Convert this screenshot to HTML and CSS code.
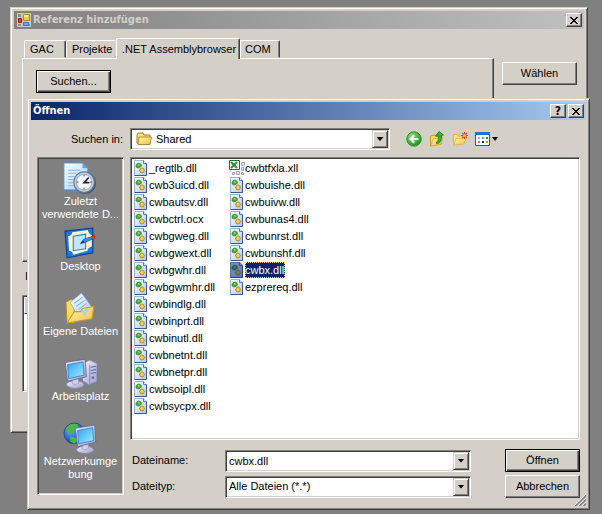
FILE: index.html
```html
<!DOCTYPE html>
<html lang="de">
<head>
<meta charset="utf-8">
<title>Referenz hinzufügen</title>
<link rel="stylesheet" href="styles.css">
</head>
<body>
<svg class="defs" aria-hidden="true">
  <defs>
    <linearGradient id="paper" x1="0" y1="0" x2="1" y2="1"><stop offset="0" stop-color="#fff"/><stop offset="1" stop-color="#a8ccfa"/></linearGradient>
    <linearGradient id="screen" x1="0" y1="0" x2="1" y2="1"><stop offset="0" stop-color="#2ea4f4"/><stop offset="1" stop-color="#a4ecff"/></linearGradient>
    <linearGradient id="folder" x1="0" y1="0" x2="1" y2="1"><stop offset="0" stop-color="#fff6b4"/><stop offset="1" stop-color="#f0c040"/></linearGradient>
    <linearGradient id="metal" x1="0" y1="0" x2="1" y2="1"><stop offset="0" stop-color="#f4f4ff"/><stop offset="1" stop-color="#9c9ccc"/></linearGradient>
    <radialGradient id="green" cx=".35" cy=".3" r=".8"><stop offset="0" stop-color="#8ce070"/><stop offset="1" stop-color="#129018"/></radialGradient>
    <radialGradient id="ocean" cx=".35" cy=".3" r=".8"><stop offset="0" stop-color="#60b4ff"/><stop offset="1" stop-color="#0838a8"/></radialGradient>
    <symbol id="dll" viewBox="0 0 16 16">
      <path d="M1.500.5h9l3 3v12h-12z" fill="url(#paper)" stroke="#98b0dc"/>
      <path d="M1.500 15.500h12v-12" fill="none" stroke="#38589c"/>
      <path d="M10.500.5v3h3" fill="#dce8fc" stroke="#5878b8"/>
      <path d="M3 5l1-1.500 2-.5 2 1 .5 2-1.500 1.500-2 .5L3 7z" fill="#48a830" stroke="#2c7c24" stroke-width=".6"/>
      <path d="M4.500 5l1-1 1.500 1-1 1z" fill="#a8e080"/>
      <path d="M9 7.500v6M6 10.500h6M7 8.500l4 4M11 8.500l-4 4" stroke="#c88c20" stroke-width="1.300"/>
      <circle cx="9" cy="10.500" r="2" fill="#fcd458" stroke="#c88c20" stroke-width=".6"/>
    </symbol>
    <symbol id="monitor" viewBox="0 0 22 28">
      <ellipse cx="10" cy="24" rx="8" ry="3.500" fill="url(#metal)" stroke="#8888a8"/>
      <path d="M8 17l5-1v7q-3 2-6 0z" fill="#d0d0e8" stroke="#9494b8" stroke-width=".6"/>
      <path d="M1 4l18-3 1 16-17 4z" fill="url(#metal)" stroke="#666690" stroke-width=".8"/>
      <path d="M3 6l14-2.500 1 12-14 3z" fill="url(#screen)" stroke="#186cb8" stroke-width=".6"/>
    </symbol>
  </defs>
</svg>
<main class="desktop">
  <section class="window back" aria-label="Referenz hinzufügen">
    <header class="titlebar inactive">
      <svg class="app-icon" viewBox="0 0 14 14" aria-hidden="true">
        <path d="M0 0h14v14H0z" fill="#c8c8c8"/>
        <path d="M1 1h3v3H1zM6 10h2v3H6zM1 11h3v2H1zM12 11h1v2h-1z" fill="#909090"/>
        <path d="M6.500 1.500h6v6h-6z" fill="#fcc830" stroke="#b88810"/><path d="M7 2h4v2H7z" fill="#ffeaa0"/>
        <path d="M1.500 5.500h3v4h-3z" fill="#f03828" stroke="#a81010"/>
        <path d="M6.500 9.500h5v3h-5z" fill="#68a4f8" stroke="#3870d0"/>
      </svg>
      <h1>Referenz hinzufügen</h1>
      <button class="caption" aria-label="Schließen"><svg viewBox="0 0 8 7"><path d="M0 0h2v1h1v1h2V1h1V0h2v1H7v1H6v1H5v1h1v1h1v1h1v1H6V6H5V5H3v1H2v1H0V6h1V5h1V4h1V3H2V2H1V1H0z"/></svg></button>
    </header>
    <div class="back-body">
      <div class="tab-area">
        <div class="tabs" role="tablist">
          <button class="tab gac" role="tab">GAC</button>
          <button class="tab projects" role="tab">Projekte</button>
          <button class="tab active" role="tab" aria-selected="true">.NET Assemblybrowser</button>
          <button class="tab com" role="tab">COM</button>
        </div>
        <div class="panel" role="tabpanel"><button class="button default">Suchen...</button></div>
        <div class="clipped-label">I</div>
        <div class="selected-list sunken"><div class="list-head"></div></div>
      </div>
      <div class="side"><button class="button">Wählen</button></div>
    </div>
  </section>

  <section class="window front" role="dialog" aria-label="Öffnen">
    <header class="titlebar">
      <h2>Öffnen</h2>
      <div class="captions">
        <button class="caption help" aria-label="Hilfe">?</button>
        <button class="caption" aria-label="Schließen"><svg viewBox="0 0 8 7"><path d="M0 0h2v1h1v1h2V1h1V0h2v1H7v1H6v1H5v1h1v1h1v1h1v1H6V6H5V5H3v1H2v1H0V6h1V5h1V4h1V3H2V2H1V1H0z"/></svg></button>
      </div>
    </header>
    <div class="lookin">
      <label for="folder-select">Suchen in:</label>
      <div class="combo sunken">
        <svg class="folder-icon" viewBox="0 0 16 14" aria-hidden="true"><path d="M1 3l1-2h5l1 2h6v9H2L1 11z" fill="#fbe27c" stroke="#a87c18"/><path d="M3 5h12.500L14 12.500H2z" fill="url(#folder)" stroke="#a87c18" stroke-width=".8"/></svg>
        <select id="folder-select"><option>Shared</option></select>
        <span class="drop"></span>
      </div>
      <div class="tools">
        <button aria-label="Zurück"><svg viewBox="0 0 16 16"><circle cx="8" cy="8" r="7.200" fill="url(#green)" stroke="#289028"/><path d="M3 8l4.500-4.500L9 5 7.300 7H12.500v2H7.300L9 11l-1.500 1.500z" fill="#fff"/></svg></button>
        <button aria-label="Übergeordneter Ordner"><svg viewBox="0 0 16 16"><path d="M1.500 15V5l4-1 1 1.500 6-1.500v9z" fill="#f8dc60" stroke="#c89c20"/><path d="M2 15l2-7 9.500-2-1.500 7z" fill="url(#folder)" stroke="#d0a428" stroke-width=".7"/><path d="M7 12q3-2 2.500-7H6.500l3.500-4.500L14.500 4l-2 .5q.5 6-3.500 8z" fill="#38b030" stroke="#187818" stroke-width=".8"/></svg></button>
        <button aria-label="Neuer Ordner"><svg viewBox="0 0 16 16"><path d="M1.500 14V3.500h4l1 1.500h5v8z" fill="#fbe27c" stroke="#e0b448"/><path d="M2 14l2-6.500 10-.5-2 6z" fill="url(#folder)" stroke="#e0b448" stroke-width=".8"/><path d="M12.500 1v7M9 4.500h7M10 2l5 5M15 2l-5 5" stroke="#f05020" stroke-width="1.200"/><circle cx="12.500" cy="4.500" r="1.500" fill="#ffac60"/></svg></button>
        <button class="views" aria-label="Ansichten"><svg viewBox="0 0 16 16"><path d="M.5 1.500h14v13H.5z" fill="#fff" stroke="#0868c8"/><path d="M0 1h15v3H0z" fill="#1078e0"/><path d="M3 6h2v2H3z" fill="#b8a8c8"/><path d="M7 6h2v2H7z" fill="#60a0e0"/><path d="M11 6h2v2h-2z" fill="#289028"/><path d="M3 10h2v2H3z" fill="#f07050"/><path d="M7 10h2v2H7z" fill="#002890"/><path d="M11 10h2v2h-2z" fill="#c8a010"/></svg><span class="arrow"></span></button>
      </div>
    </div>
    <div class="front-body">
      <nav class="places sunken" aria-label="Orte">
        <button><svg viewBox="1 0 31 31"><path d="M0 1h18l5 5v21H0z" fill="url(#paper)" stroke="#4890e8" stroke-width=".8"/><path d="M18 1v5h5" fill="#58a0f0"/><path d="M4 8h12M4 11h8M4 14h6M4 17h5M4 20h5M4 23h6" stroke="#8cb8ec"/><circle cx="20.500" cy="20.500" r="10.500" fill="#4c5464"/><circle cx="19.500" cy="19.500" r="10" fill="#b8cce4" stroke="#5c7898"/><circle cx="19.500" cy="19.500" r="7.500" fill="#f4faff" stroke="#88a8c8" stroke-width=".8"/><path d="M19.500 12v2M19.500 25v2M12 19.500h2M25 19.500h2" stroke="#f07020" stroke-width="1.500"/><path d="M24 15l-4.500 5h5" fill="none" stroke="#182838" stroke-width="1.700"/></svg><span>Zuletzt<br>verwendete D...</span></button>
        <button><svg viewBox="1 0 31 31"><path d="M1 4l27-3v24L3 30z" fill="#1878e0" stroke="#083c90"/><path d="M4 9q4-1 4-4l15-2q1 4 4 5v11q-4 1-4 4L9 27q-1-4-4-4z" fill="#fff5c8"/><path d="M9 9l12-2v14l-12 2z" fill="#c4e4ff" stroke="#1878e0"/><path d="M16 16l3-4 9-3 1 2-9 4z" fill="#3890e8" stroke="#184c98" stroke-width=".8"/><path d="M16 16l3-3 1 2z" fill="#183050"/><path d="M27 9l3-1 1 3-3 1z" fill="#d83018"/></svg><span>Desktop</span></button>
        <button><svg viewBox="1 0 31 31"><path d="M2 10l5-3 3 3v20l-7-1z" fill="#f8dc60" stroke="#b88c18" stroke-width=".8"/><path d="M6 10L17 1l11 15-14 9z" fill="url(#paper)" stroke="#78a4dc" stroke-width=".7"/><path d="M10 11l8-6M12 14l8-6M14 17l8-6" stroke="#88b4e8"/><path d="M3 30l7-11h6l2-3 11-2-2 12z" fill="url(#folder)" stroke="#c89c28"/><path d="M16 18l9-2-5 8z" fill="#a4d0f4" opacity=".8"/></svg><span>Eigene Dateien</span></button>
        <button><svg viewBox="1 0 31 31"><path d="M18 6l7-3 7 3v18l-8 3-6-4z" fill="url(#metal)" stroke="#7878a8" stroke-width=".7"/><path d="M25 8v19" stroke="#8888b8"/><path d="M26 10l5-1M26 13l5-1M26 16l5-1" stroke="#6060a0"/><circle cx="28" cy="20" r="1.300" fill="#6868b0"/><use href="#monitor" x="0" y="1" width="24" height="30"/></svg><span>Arbeitsplatz</span></button>
        <button><svg viewBox="1 0 31 31"><circle cx="10" cy="11" r="10" fill="url(#ocean)" stroke="#082c78" stroke-width=".6"/><path d="M2 6l5-4h6l1 4-4 1-1 4-5 1zM6 14l5 1 3 3-4 3-4-2z" fill="#48bc38"/><use href="#monitor" x="10" y="1" width="23" height="31"/></svg><span>Netzwerkumge<br>bung</span></button>
      </nav>
      <div class="main">
        <div class="files sunken">
          <ul>
            <li><svg><use href="#dll"/></svg><span>_regtlb.dll</span></li>
            <li><svg><use href="#dll"/></svg><span>cwb3uicd.dll</span></li>
            <li><svg><use href="#dll"/></svg><span>cwbautsv.dll</span></li>
            <li><svg><use href="#dll"/></svg><span>cwbctrl.ocx</span></li>
            <li><svg><use href="#dll"/></svg><span>cwbgweg.dll</span></li>
            <li><svg><use href="#dll"/></svg><span>cwbgwext.dll</span></li>
            <li><svg><use href="#dll"/></svg><span>cwbgwhr.dll</span></li>
            <li><svg><use href="#dll"/></svg><span>cwbgwmhr.dll</span></li>
            <li><svg><use href="#dll"/></svg><span>cwbindlg.dll</span></li>
            <li><svg><use href="#dll"/></svg><span>cwbinprt.dll</span></li>
            <li><svg><use href="#dll"/></svg><span>cwbinutl.dll</span></li>
            <li><svg><use href="#dll"/></svg><span>cwbnetnt.dll</span></li>
            <li><svg><use href="#dll"/></svg><span>cwbnetpr.dll</span></li>
            <li><svg><use href="#dll"/></svg><span>cwbsoipl.dll</span></li>
            <li><svg><use href="#dll"/></svg><span>cwbsycpx.dll</span></li>
            <li><svg viewBox="0 0 16 16"><path d="M.5.5h10v9H.5z" fill="#fff" stroke="#207830"/><path d="M2 2l6 6M8 2L2 8" stroke="#289038" stroke-width="2"/><path d="M12.500 2.500h3v3h-3zM12.500 7.500h2v3h-2zM7.500 11.500h3v3h-3zM12.500 12.500h2v2h-2zM3.500 12.500h2v2h-2z" fill="#d8f0fc" stroke="#98a8b8"/></svg><span>cwbtfxla.xll</span></li>
            <li><svg><use href="#dll"/></svg><span>cwbuishe.dll</span></li>
            <li><svg><use href="#dll"/></svg><span>cwbuivw.dll</span></li>
            <li><svg><use href="#dll"/></svg><span>cwbunas4.dll</span></li>
            <li><svg><use href="#dll"/></svg><span>cwbunrst.dll</span></li>
            <li><svg><use href="#dll"/></svg><span>cwbunshf.dll</span></li>
            <li class="selected"><svg viewBox="0 0 16 16"><use href="#dll"/><path d="M1 0h10l3 3v13H1z" fill="#0a246a" opacity=".5"/></svg><span>cwbx.dll</span></li>
            <li><svg><use href="#dll"/></svg><span>ezprereq.dll</span></li>
          </ul>
        </div>
        <form class="fields">
          <label for="file-name">Dateiname:</label>
          <div class="combo sunken"><input id="file-name" type="text" value="cwbx.dll"><button type="button" class="drop" aria-label="Liste öffnen"></button></div>
          <button type="button" class="button default">Öffnen</button>
          <label for="file-type">Dateityp:</label>
          <div class="combo sunken"><select id="file-type"><option>Alle Dateien (*.*)</option></select><span class="drop"></span></div>
          <button type="button" class="button">Abbrechen</button>
        </form>
      </div>
    </div>
    <svg class="grip" viewBox="0 0 12 12" aria-hidden="true"><path d="M0 12L12 0M4 12l8-8M8 12l4-4" stroke="#fff"/><path d="M1.500 12L12 1.500M5.500 12L12 5.500M9.500 12L12 9.500" stroke="#808080" stroke-width="1.600"/></svg>
  </section>
</main>
</body>
</html>
```
FILE: styles.css
```css
* { box-sizing: border-box; }

body {
  margin: 0;
  background: #808080;
  color: #000;
  font: 11px/13px "Liberation Sans", Arial, sans-serif;
}

button, input, select { font: inherit; color: inherit; border: 0; border-radius: 0; padding: 0; margin: 0; background: none; }
h1, h2, ul { margin: 0; padding: 0; }
svg { display: block; flex: none; }

.defs { position: absolute; width: 0; height: 0; }

.desktop { position: relative; height: 100vh; overflow: hidden; }

.window {
  position: absolute;
  display: flex;
  flex-direction: column;
  padding: 3px;
  background: #d4d0c8;
  border: 1px solid;
  border-color: #d4d0c8 #404040 #404040 #d4d0c8;
  box-shadow: inset 1px 1px #fff, inset -1px -1px #808080;
}
.back { top: 7px; right: 14px; bottom: 81px; left: 10px; }
.front { top: 98px; right: 12px; bottom: 4px; left: 27px; }

.titlebar {
  display: flex;
  align-items: center;
  justify-content: space-between;
  flex: none;
  height: 18px;
  padding: 0 2px;
  color: #fff;
  background: linear-gradient(90deg, #0a246a, #a6caf0);
}
.titlebar.inactive { color: #d4d0c8; background: linear-gradient(90deg, #808080, #c0c0c0); }
.titlebar h1, .titlebar h2 { flex: 1; font: bold 11px/18px "DejaVu Sans Condensed", "DejaVu Sans", sans-serif; }
.app-icon { width: 14px; height: 14px; margin: 0 2px 0 1px; }
.captions { display: flex; gap: 2px; }

.caption {
  display: flex;
  align-items: center;
  justify-content: center;
  width: 16px;
  height: 14px;
  color: #000;
  background: #d4d0c8;
  border: 1px solid;
  border-color: #fff #404040 #404040 #fff;
  box-shadow: inset -1px -1px #808080;
}
.caption svg { width: 8px; height: 7px; margin-right: 1px; }
.help { font: bold 12px/12px "DejaVu Sans Condensed", sans-serif; }

.sunken {
  background: #fff;
  border: 1px solid;
  border-color: #808080 #fff #fff #808080;
  box-shadow: inset 1px 1px #404040, inset -1px -1px #d4d0c8;
}

.button {
  width: 75px;
  height: 23px;
  background: #d4d0c8;
  border: 1px solid;
  border-color: #fff #404040 #404040 #fff;
  box-shadow: inset -1px -1px #808080;
}
.button.default { border-color: #000; box-shadow: inset 1px 1px #fff, inset -1px -1px #404040, inset -2px -2px #808080; }

.back-body { display: flex; flex: 1; gap: 8px; padding: 9px 7px 37px 8px; }
.tab-area { display: flex; flex: 1; flex-direction: column; }
.tabs { display: flex; align-items: flex-end; height: 20px; padding-left: 2px; }
.tab {
  height: 18px;
  padding-left: 5px;
  text-align: left;
  border: 1px solid;
  border-color: #fff #404040 transparent #fff;
  border-radius: 2px 2px 0 0;
  box-shadow: inset -1px 0 #808080;
  white-space: nowrap;
}
.gac { width: 42px; }
.projects { width: 50px; border-right-color: transparent; box-shadow: none; }
.tab.active { z-index: 1; width: 124px; height: 21px; margin-bottom: -1px; background: #d4d0c8; border-bottom: 0; }
.com { width: 40px; padding-left: 4px; }
.panel {
  height: 204px;
  padding: 11px 13px;
  border: 1px solid;
  border-color: #fff #404040 #404040 #fff;
  box-shadow: inset -1px -1px #808080;
}
.clipped-label { padding: 8px 3px 12px; }
.selected-list { flex: 1; padding: 1px; }
.list-head { height: 17px; background: #d4d0c8; border: 1px solid; border-color: #fff #404040 #404040 #fff; }
.side { padding-top: 24px; }

.lookin { display: flex; align-items: center; flex: none; padding: 8px 0 7px 6px; }
.lookin label { width: 93px; padding-right: 7px; text-align: right; }
.combo { position: relative; display: flex; align-items: center; height: 22px; padding: 2px 1px; }
.lookin .combo { flex: 0 1 260px; }
.combo select, .combo input { flex: 1; min-width: 0; height: 100%; padding: 0 2px; appearance: none; outline: 0; }
.folder-icon { width: 16px; height: 14px; margin: 0 2px 0 4px; }
.drop {
  display: flex;
  align-items: center;
  justify-content: center;
  width: 16px;
  height: 18px;
  background: #d4d0c8;
  border: 1px solid;
  border-color: #d4d0c8 #404040 #404040 #d4d0c8;
  box-shadow: inset 1px 1px #fff, inset -1px -1px #808080;
  pointer-events: none;
}
.drop::before, .arrow {
  content: "";
  width: 7px;
  height: 4px;
  background: #000;
  clip-path: polygon(0 0, 100% 0, 50% 100%);
}
.tools { display: flex; gap: 7px; padding-left: 16px; }
.tools svg { width: 16px; height: 16px; }
.views { display: flex; align-items: center; gap: 1px; }
.arrow { width: 6px; height: 4px; }

.front-body { display: flex; flex: 1; gap: 6px; min-height: 0; padding: 0 6px 11px; }
.places {
  display: flex;
  flex: none;
  flex-direction: column;
  gap: 7px;
  width: 87px;
  padding-top: 4px;
  color: #fff;
  background: #808080;
}
.places button { display: flex; flex-direction: column; align-items: center; height: 58px; }
.places svg { width: 32px; height: 32px; margin-bottom: 1px; overflow: visible; }

.main { display: flex; flex: 1; flex-direction: column; gap: 9px; min-width: 0; margin-bottom: -3px; }
.files { flex: 1; padding: 1px 2px; }
.files ul {
  display: grid;
  grid-template-rows: repeat(15, 17px);
  grid-auto-flow: column;
  grid-auto-columns: 96px;
  list-style: none;
}
.files li { display: flex; align-items: center; }
.files svg { width: 16px; height: 16px; }
.files span { padding: 1px 1px 1px 0; line-height: 14px; }
.selected span { color: #fff; background: #0a246a; outline: 1px dotted #f5db95; outline-offset: -1px; }

.fields { display: grid; grid-template-columns: 95px minmax(0, 1fr) 75px; row-gap: 3px; align-items: center; }
.fields label { padding-left: 2px; }
.fields .combo { margin-right: 34px; }

.grip { position: absolute; right: 3px; bottom: 3px; width: 12px; height: 12px; }
```
